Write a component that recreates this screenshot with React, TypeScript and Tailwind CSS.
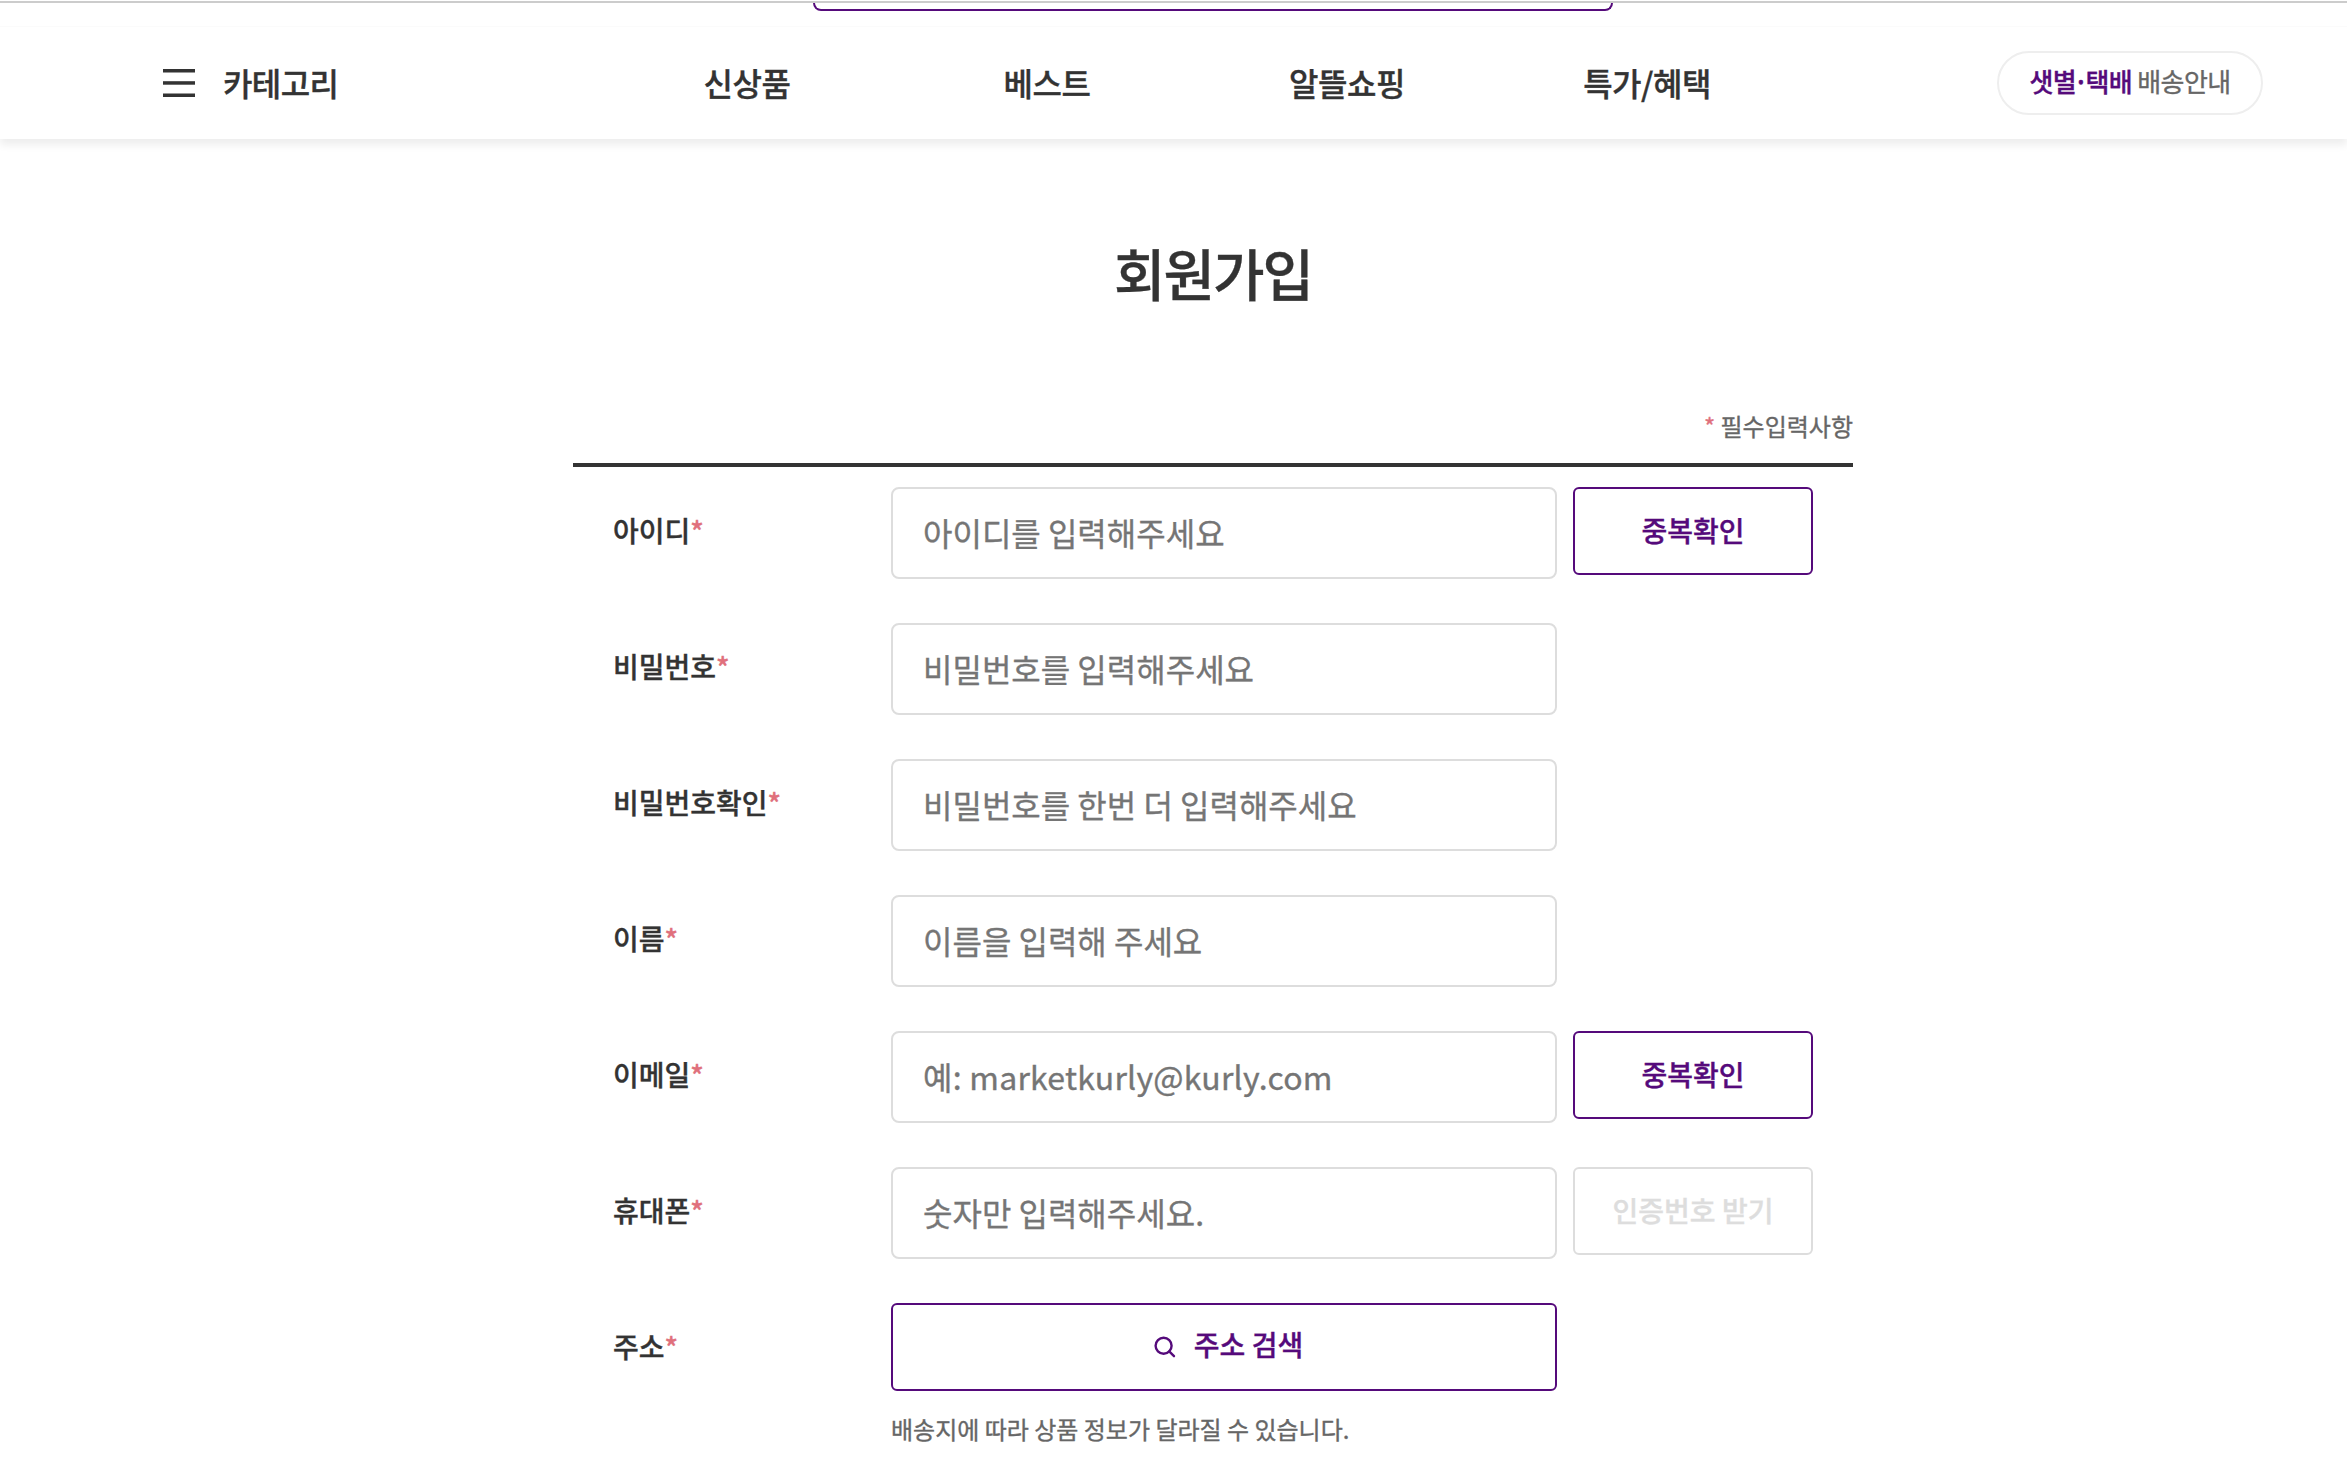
import type { ReactNode } from 'react'

type Field = {
  id: string
  label: string
  type: string
  placeholder: string
  action?: string
  disabled?: boolean
}

const MENU = ['신상품', '베스트', '알뜰쇼핑', '특가/혜택']

const FIELDS: Field[] = [
  { id: 'userId', label: '아이디', type: 'text', placeholder: '아이디를 입력해주세요', action: '중복확인' },
  { id: 'password', label: '비밀번호', type: 'password', placeholder: '비밀번호를 입력해주세요' },
  { id: 'passwordConfirm', label: '비밀번호확인', type: 'password', placeholder: '비밀번호를 한번 더 입력해주세요' },
  { id: 'name', label: '이름', type: 'text', placeholder: '이름을 입력해 주세요' },
  { id: 'email', label: '이메일', type: 'email', placeholder: '예: marketkurly@kurly.com', action: '중복확인' },
  { id: 'phone', label: '휴대폰', type: 'tel', placeholder: '숫자만 입력해주세요.', action: '인증번호 받기', disabled: true },
]

function MenuIcon() {
  return (
    <svg width="32" height="28" viewBox="0 0 32 28" fill="#333333">
      <rect width="32" height="3.5" />
      <rect y="12.2" width="32" height="3.5" />
      <rect y="24.5" width="32" height="3.5" />
    </svg>
  )
}

function SearchIcon() {
  return (
    <svg width="22" height="22" viewBox="0 0 22 22" fill="none" stroke="#550a7b" strokeWidth="2.4">
      <circle cx="9.6" cy="9.7" r="8" />
      <path d="M15.2 15.3L20 20.2" strokeLinecap="round" />
    </svg>
  )
}

function Header() {
  return (
    <header className="h-[139px] bg-white shadow-[0_6px_8px_0_rgba(0,0,0,0.07)]">
      <div className="h-px" />
      <div className="h-0.5 bg-[#cccccc]" />
      <div className="h-[24px] border-b border-[#fbfbfb] pl-[813px]">
        <div className="h-2 w-[800px] rounded-b-xl border-2 border-t-0 border-[#550a7b]" />
      </div>
      <div className="flex h-[112px] items-start">
        <button className="mt-[37px] flex w-[597px] items-center pl-[163px] text-[32px] leading-[36px] font-medium tracking-[-0.6px]">
          <span className="mt-px">
            <MenuIcon />
          </span>
          <span className="ml-7">카테고리</span>
        </button>
        <ul className="mt-[37px] flex">
          {MENU.map((item) => (
            <li key={item} className="w-[300px] text-center text-[32px] leading-[36px] font-medium tracking-[-0.5px]">
              {item}
            </li>
          ))}
        </ul>
        <button className="mt-[24px] ml-[200px] flex h-16 w-[266px] items-center justify-center rounded-full border-2 border-[#eeeeee] pb-[5px] text-[26px] text-[#666666]">
          <span className="tracking-[-0.6px]">
            <span className="font-medium text-[#550a7b]">
              샛별<span className="-mx-[2.5px]">·</span>택배
            </span>{' '}
            배송안내
          </span>
        </button>
      </div>
    </header>
  )
}

function Row({ id, label, children }: { id: string; label: string; children: ReactNode }) {
  return (
    <div className="flex h-[136px] items-start pt-5 pl-10">
      <label htmlFor={id} className="w-[278px] pt-[23px] text-[28px] leading-[40px] font-medium">
        {label}
        <span className="text-[#e0707c]">*</span>
      </label>
      {children}
    </div>
  )
}

export default function App() {
  return (
    <div className="h-[1470px] overflow-hidden bg-white font-['Noto_Sans_CJK_KR','Noto_Sans',sans-serif] text-[#333333] [-webkit-text-stroke:0.35px]">
      <Header />
      <main className="ml-[573px] w-[1280px]">
        <h1 className="pt-[98px] text-center text-[56px] leading-[70px] font-medium tracking-[-2px]">회원가입</h1>
        <div className="mt-[86px] h-[74px] border-b-4 border-[#333333] pt-[16px] text-right text-[24px] leading-[34px] text-[#666666]">
          <span className="text-[#e0707c]">*</span> 필수입력사항
        </div>
        <form>
          {FIELDS.map((field) => (
            <Row key={field.id} id={field.id} label={field.label}>
              <input
                id={field.id}
                type={field.type}
                placeholder={field.placeholder}
                className="h-[92px] w-[666px] rounded-lg border-2 border-[#dddddd] px-[30px] pb-[3px] text-[32px] placeholder:text-[#757575] [&[type=email]]:tracking-[0.25px]"
              />
              {field.action && (
                <button
                  type="button"
                  disabled={field.disabled}
                  className="ml-4 h-[88px] w-[240px] rounded-md border-2 border-[#550a7b] pb-[2px] text-[28px] font-medium text-[#550a7b] disabled:border-[#dddddd] disabled:text-[#dddddd]"
                >
                  {field.action}
                </button>
              )}
            </Row>
          ))}
          <Row id="address" label="주소">
            <div>
              <button
                id="address"
                type="button"
                className="flex h-[88px] w-[666px] items-center justify-center rounded-md border-2 border-[#550a7b] pl-[9px] text-[28px] font-medium text-[#550a7b]"
              >
                <SearchIcon />
                <span className="ml-[18px] pb-[6px]">주소 검색</span>
              </button>
              <p className="mt-[20px] text-[24px] leading-[36px] text-[#666666]">
                배송지에 따라 상품 정보가 달라질 수 있습니다.
              </p>
            </div>
          </Row>
        </form>
      </main>
    </div>
  )
}
